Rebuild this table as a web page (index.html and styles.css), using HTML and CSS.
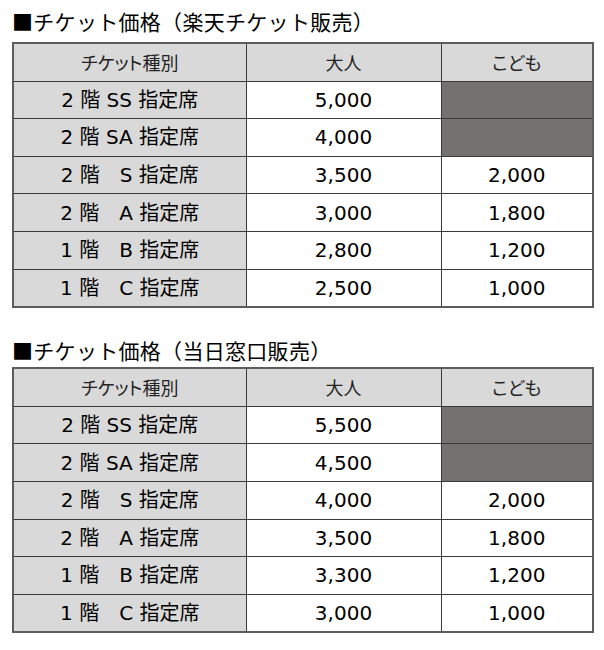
FILE: index.html
```html
<!DOCTYPE html>
<html lang="ja">
<head>
<meta charset="utf-8">
<link rel="stylesheet" href="styles.css">
</head>
<body>
<div class="page">
  <h2 class="title title-first">■チケット価格（楽天チケット販売）</h2>
  <table class="prices">
    <colgroup><col class="c1"><col class="c2"><col class="c3"></colgroup>
    <tr class="head"><th>チケット種別</th><th>大人</th><th>こども</th></tr>
    <tr><td class="kind">2 階 SS 指定席</td><td>5,000</td><td class="na"></td></tr>
    <tr><td class="kind">2 階 SA 指定席</td><td>4,000</td><td class="na"></td></tr>
    <tr><td class="kind">2 階　S 指定席</td><td>3,500</td><td>2,000</td></tr>
    <tr><td class="kind">2 階　A 指定席</td><td>3,000</td><td>1,800</td></tr>
    <tr><td class="kind">1 階　B 指定席</td><td>2,800</td><td>1,200</td></tr>
    <tr><td class="kind">1 階　C 指定席</td><td>2,500</td><td>1,000</td></tr>
  </table>
  <h2 class="title title-second">■チケット価格（当日窓口販売）</h2>
  <table class="prices">
    <colgroup><col class="c1"><col class="c2"><col class="c3"></colgroup>
    <tr class="head"><th>チケット種別</th><th>大人</th><th>こども</th></tr>
    <tr><td class="kind">2 階 SS 指定席</td><td>5,500</td><td class="na"></td></tr>
    <tr><td class="kind">2 階 SA 指定席</td><td>4,500</td><td class="na"></td></tr>
    <tr><td class="kind">2 階　S 指定席</td><td>4,000</td><td>2,000</td></tr>
    <tr><td class="kind">2 階　A 指定席</td><td>3,500</td><td>1,800</td></tr>
    <tr><td class="kind">1 階　B 指定席</td><td>3,300</td><td>1,200</td></tr>
    <tr><td class="kind">1 階　C 指定席</td><td>3,000</td><td>1,000</td></tr>
  </table>
</div>
</body>
</html>
```

FILE: styles.css
```css
html, body {
  margin: 0;
  padding: 0;
  background: #ffffff;
}
.page {
  padding: 9px 12px 0 12px;
  font-family: "DejaVu Sans", "Noto Sans CJK JP", sans-serif;
  color: #000;
}
.title {
  margin: 0;
  font-family: "Noto Sans CJK JP", sans-serif;
  font-weight: 400;
  font-size: 21px;
  line-height: 24px;
  letter-spacing: 0.3px;
  color: #000;
}
.title-first {
  margin-bottom: 9px;
}
.title-second {
  margin-top: 30px;
  margin-bottom: 5px;
}
.prices {
  border-collapse: collapse;
  width: 580px;
  table-layout: fixed;
  border: 2px solid #5c5c5c;
}
.c1 { width: 233px; }
.c2 { width: 195px; }
.c3 { width: 152px; }
.prices th,
.prices td {
  border: 1px solid #3a3a3a;
  height: 36.6px;
  padding: 0;
  text-align: center;
  vertical-align: middle;
  font-size: 20px;
  line-height: 22px;
}
.prices th {
  background: #d9d9d9;
  font-family: "Noto Sans CJK JP", sans-serif;
  font-weight: 400;
  font-size: 18px;
  color: #222;
  font-feature-settings: "palt";
}
.prices td.kind {
  background: #d9d9d9;
}
.prices td.na {
  background: #767171;
}
```
